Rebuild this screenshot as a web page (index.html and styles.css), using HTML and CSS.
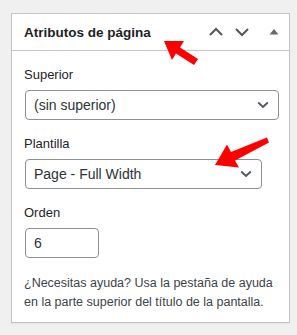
FILE: index.html
```html
<!DOCTYPE html>
<html lang="es">
<head>
  <meta charset="UTF-8">
  <title>Atributos de página</title>
  <link rel="stylesheet" href="styles.css">
</head>
<body>

  <!-- Panel -->
  <div class="postbox">
    <div class="postbox-header">
      <h2 class="hndle">Atributos de página</h2>
      <div class="handle-actions">
        <button class="handle-btn" aria-label="Mover arriba">
          <svg width="16" height="16" viewBox="0 0 16 16"><path d="M2 11 L8 5 L14 11" fill="none" stroke="#50575e" stroke-width="2"/></svg>
        </button>
        <button class="handle-btn" aria-label="Mover abajo">
          <svg width="16" height="16" viewBox="0 0 16 16"><path d="M2 5 L8 11 L14 5" fill="none" stroke="#50575e" stroke-width="2"/></svg>
        </button>
        <button class="handle-btn toggle" aria-label="Cerrar panel">
          <svg width="12" height="12" viewBox="0 0 12 12"><path d="M1.5 8.5 L6 3 L10.5 8.5 Z" fill="#646970"/></svg>
        </button>
      </div>
    </div>

    <div class="inside">
      <p class="field-label">Superior</p>
      <div class="select wide">
        <span>(sin superior)</span>
        <svg width="12" height="12" viewBox="0 0 12 12"><path d="M1.2 3.5 L6 8 L10.8 3.5" fill="none" stroke="#50575e" stroke-width="1.8"/></svg>
      </div>

      <p class="field-label">Plantilla</p>
      <div class="select">
        <span>Page - Full Width</span>
        <svg width="12" height="12" viewBox="0 0 12 12"><path d="M1.2 3.5 L6 8 L10.8 3.5" fill="none" stroke="#50575e" stroke-width="1.8"/></svg>
      </div>

      <p class="field-label">Orden</p>
      <div class="num-input">6</div>

      <p class="help">¿Necesitas ayuda? Usa la pestaña de ayuda en la parte superior del título de la pantalla.</p>
    </div>
  </div>

  <!-- Red annotation arrows -->
  <svg class="arrows" width="297" height="335" viewBox="0 0 297 335">
    <polygon points="164,41 184,41 180,47.5 198,59 194,65 176,53.5 172,60" fill="#ff0000"/>
    <polygon points="215,165 227,144.5 231,152 267,137.5 269,142.5 235,160.5 239,167.5" fill="#ff0000"/>
  </svg>

</body>
</html>
```

FILE: styles.css
```css
body {
  margin: 0;
  padding: 13px 7px 12px 11px;
  background: #f0f0f1;
  font-family: "Liberation Sans", Arial, sans-serif;
  font-size: 13px;
  color: #1d2327;
  position: relative;
}

/* Panel */
.postbox {
  width: 277px;
  background: #fff;
  border: 1px solid #c3c4c7;
  box-shadow: 0 1px 1px rgba(0, 0, 0, 0.04);
}

.postbox-header {
  display: flex;
  align-items: center;
  justify-content: space-between;
  height: 36px;
  border-bottom: 1px solid #c3c4c7;
}

.hndle {
  margin: 0;
  padding-left: 12px;
  font-size: 13.5px;
  font-weight: 700;
  color: #1d2327;
}

.handle-actions {
  display: flex;
  align-items: center;
}

.handle-btn {
  width: 26px;
  height: 36px;
  padding: 0;
  border: none;
  background: none;
  display: flex;
  align-items: center;
  justify-content: center;
}

.handle-btn.toggle {
  width: 34px;
  padding-left: 3px;
}

/* Fields */
.inside {
  padding: 14px 12px 10px;
}

.field-label {
  margin: 0 0 6px;
  line-height: 19px;
  font-size: 13px;
  color: #1d2327;
}

.select {
  width: 218px;
  height: 28px;
  margin: 0 0 14px 1px;
  padding: 0 9px 0 8px;
  border: 1px solid #8c8f94;
  border-radius: 4px;
  display: flex;
  align-items: center;
  justify-content: space-between;
  color: #2c3338;
  font-size: 14px;
}

.select.wide {
  width: 235px;
}

.select svg {
  flex: none;
}

.num-input {
  width: 64px;
  height: 28px;
  line-height: 28px;
  margin-left: 1px;
  padding-left: 8px;
  border: 1px solid #8c8f94;
  border-radius: 4px;
  color: #2c3338;
  font-size: 14px;
}

.help {
  margin: 16px 0 0;
  line-height: 19px;
  font-size: 12.5px;
  color: #3c434a;
}

/* Annotations */
.arrows {
  position: absolute;
  top: 0;
  left: 0;
  pointer-events: none;
}
```
